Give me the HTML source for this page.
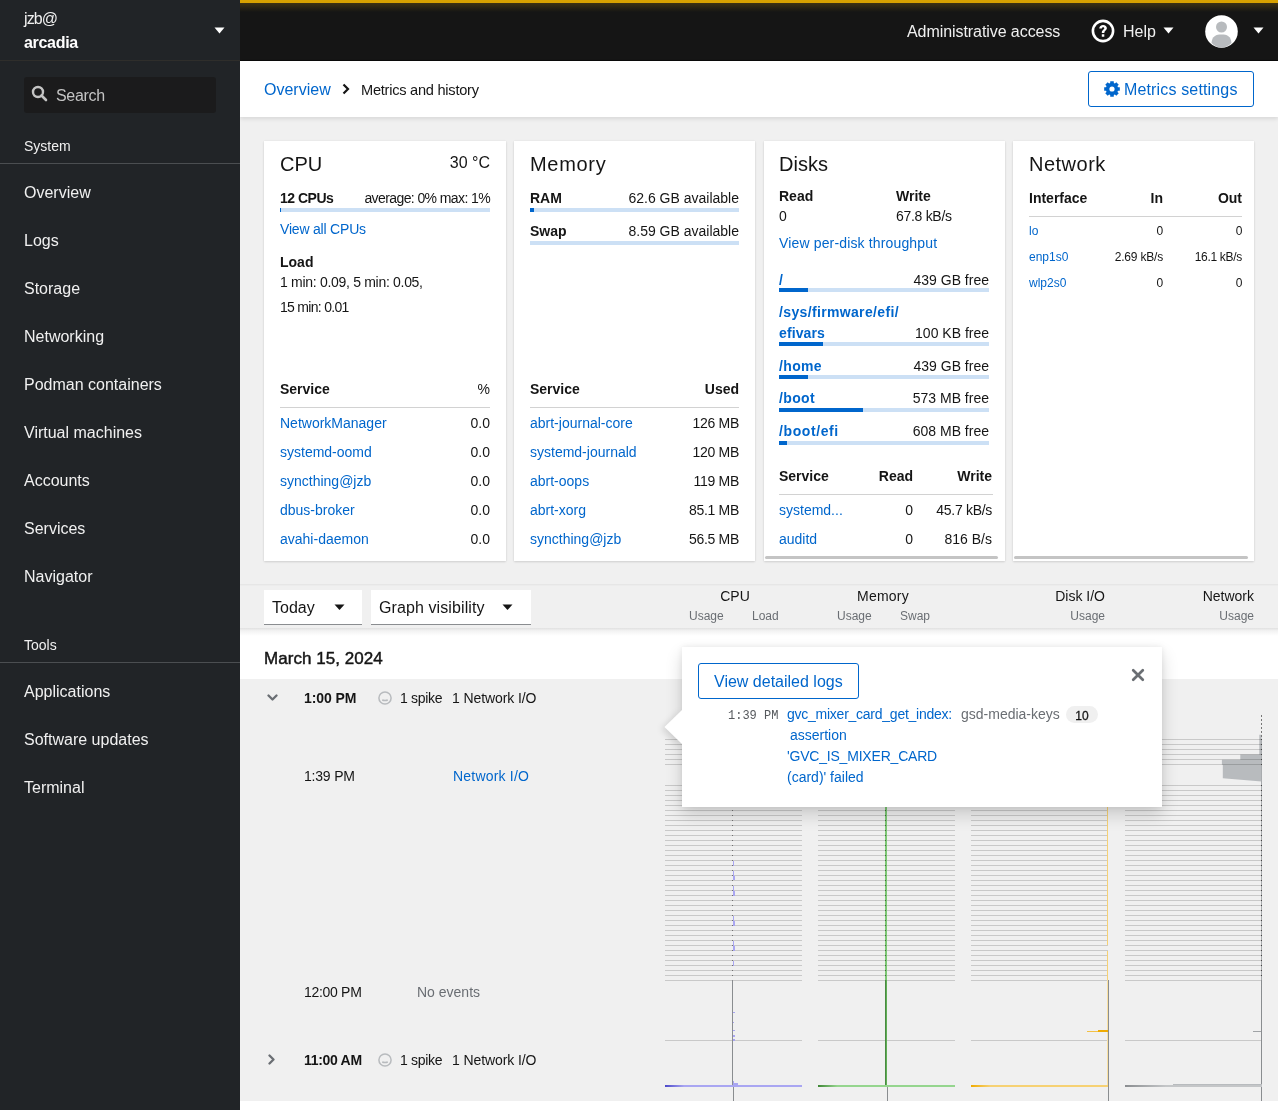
<!DOCTYPE html><html><head><meta charset="utf-8"><title>Metrics and history</title><style>
html,body{margin:0;padding:0;width:1278px;height:1110px;overflow:hidden;background:#f0f0f0;}
body{position:relative;font-family:"Liberation Sans", sans-serif;}
.t{position:absolute;white-space:nowrap;will-change:transform;}
.r{position:absolute;}
</style></head><body>
<div class="r" style="left:240px;top:0px;width:1038px;height:60px;background:#151515"></div>
<div class="r" style="left:240px;top:0px;width:1038px;height:3px;background:#d8a200"></div>
<div class="r" style="left:240px;top:3px;width:1038px;height:9px;background:linear-gradient(#3e3312,#151515)"></div>
<div class="r" style="left:240px;top:60px;width:1038px;height:1px;background:#0a0a0a"></div>
<div class="t" style="top:24.00px;font-size:16px;line-height:16px;color:#f0f0f0;letter-spacing:-0.07px;left:907px;">Administrative access</div>
<svg class="r" style="left:1091px;top:19px;" width="24" height="24" viewBox="0 0 24 24"><circle cx="12" cy="12" r="10.1" fill="none" stroke="#fff" stroke-width="2.6"/><path d="M8.3 9.6 C8.3 7.2 10 6 12.1 6 C14.3 6 15.9 7.3 15.9 9.2 C15.9 11.4 13.3 11.7 13.3 13.9 L10.8 13.9 C10.8 10.9 13.3 10.6 13.3 9.3 C13.3 8.6 12.8 8.2 12.1 8.2 C11.3 8.2 10.9 8.8 10.9 9.6 Z M10.8 15.3 L13.3 15.3 L13.3 17.8 L10.8 17.8 Z" fill="#fff"/></svg>
<div class="t" style="top:24.00px;font-size:16px;line-height:16px;color:#f0f0f0;left:1123px;">Help</div>
<svg class="r" style="left:1163px;top:27px;" width="11" height="7" viewBox="0 0 11 7"><path d="M0.5 0.5 L10.5 0.5 L5.5 6.5 Z" fill="#fff"/></svg>
<svg class="r" style="left:1205px;top:15px;" width="33" height="33" viewBox="0 0 33 33"><circle cx="16.5" cy="16.5" r="16.3" fill="#fff"/><circle cx="16.5" cy="12" r="5.5" fill="#b8bbbe"/><path d="M6.5 28 C7 21 11 19.5 16.5 19.5 C22 19.5 26 21 26.5 28 C23.5 31 20 32.5 16.5 32.5 C13 32.5 9.5 31 6.5 28 Z" fill="#b8bbbe"/></svg>
<svg class="r" style="left:1253px;top:27px;" width="11" height="7" viewBox="0 0 11 7"><path d="M0.5 0.5 L10.5 0.5 L5.5 6.5 Z" fill="#fff"/></svg>
<div class="r" style="left:240px;top:61px;width:1038px;height:56px;background:#fff;box-shadow:0 2px 4px rgba(0,0,0,0.10)"></div>
<div class="t" style="top:82.00px;font-size:16px;line-height:16px;color:#0066cc;left:264px;">Overview</div>
<svg class="r" style="left:342px;top:83px;" width="8" height="12" viewBox="0 0 8 12"><path d="M1.5 1.5 L6 6 L1.5 10.5" fill="none" stroke="#151515" stroke-width="2.2"/></svg>
<div class="t" style="top:83.00px;font-size:14.6px;line-height:14.6px;color:#151515;letter-spacing:-0.25px;left:361px;">Metrics and history</div>
<div class="r" style="left:1088px;top:71px;width:166px;height:36px;border:1px solid #0066cc;border-radius:3px;box-sizing:border-box;background:#fff"></div>
<svg class="r" style="left:1104px;top:81px;" width="16" height="16" viewBox="0 0 16 16"><path fill="#0066cc" fill-rule="evenodd" d="M13.92 6.17 L15.81 6.25 L15.81 9.75 L13.92 9.83 L13.48 10.89 L14.76 12.29 L12.29 14.76 L10.89 13.48 L9.83 13.92 L9.75 15.81 L6.25 15.81 L6.17 13.92 L5.11 13.48 L3.71 14.76 L1.24 12.29 L2.52 10.89 L2.08 9.83 L0.19 9.75 L0.19 6.25 L2.08 6.17 L2.52 5.11 L1.24 3.71 L3.71 1.24 L5.11 2.52 L6.17 2.08 L6.25 0.19 L9.75 0.19 L9.83 2.08 L10.89 2.52 L12.29 1.24 L14.76 3.71 L13.48 5.11 Z M8 5.4 A2.6 2.6 0 1 0 8 10.6 A2.6 2.6 0 1 0 8 5.4 Z"/></svg>
<div class="t" style="top:82.00px;font-size:16px;line-height:16px;color:#0066cc;letter-spacing:0.15px;left:1124px;">Metrics settings</div>
<div class="r" style="left:264px;top:141px;width:242px;height:420px;background:#fff;box-shadow:0 1px 2px rgba(3,3,3,0.12),0 0 2px rgba(3,3,3,0.06)"></div>
<div class="r" style="left:514px;top:141px;width:241px;height:420px;background:#fff;box-shadow:0 1px 2px rgba(3,3,3,0.12),0 0 2px rgba(3,3,3,0.06)"></div>
<div class="r" style="left:763.5px;top:141px;width:241.5px;height:420px;background:#fff;box-shadow:0 1px 2px rgba(3,3,3,0.12),0 0 2px rgba(3,3,3,0.06)"></div>
<div class="r" style="left:1013px;top:141px;width:241px;height:420px;background:#fff;box-shadow:0 1px 2px rgba(3,3,3,0.12),0 0 2px rgba(3,3,3,0.06)"></div>
<div class="t" style="top:154.00px;font-size:20px;line-height:20px;color:#151515;left:280px;">CPU</div>
<div class="t" style="top:155.00px;font-size:16px;line-height:16px;color:#151515;left:-110px;width:600px;text-align:right;">30 °C</div>
<div class="t" style="top:191.00px;font-size:14px;line-height:14px;color:#151515;font-weight:700;letter-spacing:-0.5px;left:280px;">12 CPUs</div>
<div class="t" style="top:191.00px;font-size:14px;line-height:14px;color:#151515;letter-spacing:-0.6px;left:-110px;width:600px;text-align:right;">average: 0% max: 1%</div>
<div class="r" style="left:280px;top:208px;width:210px;height:4px;background:#cce0f5"></div>
<div class="r" style="left:280px;top:208px;width:1px;height:4px;background:#0066cc"></div>
<div class="t" style="top:222.00px;font-size:14px;line-height:14px;color:#0066cc;letter-spacing:-0.2px;left:280px;">View all CPUs</div>
<div class="t" style="top:255.00px;font-size:14px;line-height:14px;color:#151515;font-weight:700;left:280px;">Load</div>
<div class="t" style="top:275.00px;font-size:14px;line-height:14px;color:#151515;letter-spacing:-0.3px;left:280px;">1 min: 0.09, 5 min: 0.05,</div>
<div class="t" style="top:300.00px;font-size:14px;line-height:14px;color:#151515;letter-spacing:-0.7px;left:280px;">15 min: 0.01</div>
<div class="t" style="top:382.00px;font-size:14px;line-height:14px;color:#151515;font-weight:700;left:280px;">Service</div>
<div class="t" style="top:382.00px;font-size:14px;line-height:14px;color:#151515;left:-110px;width:600px;text-align:right;">%</div>
<div class="r" style="left:280px;top:407px;width:210px;height:1px;background:#d2d2d2"></div>
<div class="t" style="top:416.00px;font-size:14px;line-height:14px;color:#0066cc;left:280px;">NetworkManager</div>
<div class="t" style="top:416.00px;font-size:14px;line-height:14px;color:#151515;left:-110px;width:600px;text-align:right;">0.0</div>
<div class="t" style="top:445.00px;font-size:14px;line-height:14px;color:#0066cc;left:280px;">systemd-oomd</div>
<div class="t" style="top:445.00px;font-size:14px;line-height:14px;color:#151515;left:-110px;width:600px;text-align:right;">0.0</div>
<div class="t" style="top:474.00px;font-size:14px;line-height:14px;color:#0066cc;left:280px;">syncthing@jzb</div>
<div class="t" style="top:474.00px;font-size:14px;line-height:14px;color:#151515;left:-110px;width:600px;text-align:right;">0.0</div>
<div class="t" style="top:503.00px;font-size:14px;line-height:14px;color:#0066cc;left:280px;">dbus-broker</div>
<div class="t" style="top:503.00px;font-size:14px;line-height:14px;color:#151515;left:-110px;width:600px;text-align:right;">0.0</div>
<div class="t" style="top:532.00px;font-size:14px;line-height:14px;color:#0066cc;left:280px;">avahi-daemon</div>
<div class="t" style="top:532.00px;font-size:14px;line-height:14px;color:#151515;left:-110px;width:600px;text-align:right;">0.0</div>
<div class="t" style="top:154.00px;font-size:20px;line-height:20px;color:#151515;letter-spacing:0.7px;left:530px;">Memory</div>
<div class="t" style="top:191.00px;font-size:14px;line-height:14px;color:#151515;font-weight:700;left:530px;">RAM</div>
<div class="t" style="top:191.00px;font-size:14px;line-height:14px;color:#151515;left:139px;width:600px;text-align:right;">62.6 GB available</div>
<div class="r" style="left:530px;top:208px;width:209px;height:4px;background:#cce0f5"></div>
<div class="r" style="left:530px;top:208px;width:4px;height:4px;background:#0066cc"></div>
<div class="t" style="top:224.00px;font-size:14px;line-height:14px;color:#151515;font-weight:700;left:530px;">Swap</div>
<div class="t" style="top:224.00px;font-size:14px;line-height:14px;color:#151515;left:139px;width:600px;text-align:right;">8.59 GB available</div>
<div class="r" style="left:530px;top:241px;width:209px;height:4px;background:#cce0f5"></div>
<div class="t" style="top:382.00px;font-size:14px;line-height:14px;color:#151515;font-weight:700;left:530px;">Service</div>
<div class="t" style="top:382.00px;font-size:14px;line-height:14px;color:#151515;font-weight:700;left:139px;width:600px;text-align:right;">Used</div>
<div class="r" style="left:530px;top:407px;width:209px;height:1px;background:#d2d2d2"></div>
<div class="t" style="top:416.00px;font-size:14px;line-height:14px;color:#0066cc;left:530px;">abrt-journal-core</div>
<div class="t" style="top:416.00px;font-size:14px;line-height:14px;color:#151515;letter-spacing:-0.3px;left:139px;width:600px;text-align:right;">126 MB</div>
<div class="t" style="top:445.00px;font-size:14px;line-height:14px;color:#0066cc;left:530px;">systemd-journald</div>
<div class="t" style="top:445.00px;font-size:14px;line-height:14px;color:#151515;letter-spacing:-0.3px;left:139px;width:600px;text-align:right;">120 MB</div>
<div class="t" style="top:474.00px;font-size:14px;line-height:14px;color:#0066cc;left:530px;">abrt-oops</div>
<div class="t" style="top:474.00px;font-size:14px;line-height:14px;color:#151515;letter-spacing:-0.3px;left:139px;width:600px;text-align:right;">119 MB</div>
<div class="t" style="top:503.00px;font-size:14px;line-height:14px;color:#0066cc;left:530px;">abrt-xorg</div>
<div class="t" style="top:503.00px;font-size:14px;line-height:14px;color:#151515;letter-spacing:-0.3px;left:139px;width:600px;text-align:right;">85.1 MB</div>
<div class="t" style="top:532.00px;font-size:14px;line-height:14px;color:#0066cc;left:530px;">syncthing@jzb</div>
<div class="t" style="top:532.00px;font-size:14px;line-height:14px;color:#151515;letter-spacing:-0.3px;left:139px;width:600px;text-align:right;">56.5 MB</div>
<div class="t" style="top:154.00px;font-size:20px;line-height:20px;color:#151515;left:779px;">Disks</div>
<div class="t" style="top:189.00px;font-size:14px;line-height:14px;color:#151515;font-weight:700;left:779px;">Read</div>
<div class="t" style="top:189.00px;font-size:14px;line-height:14px;color:#151515;font-weight:700;left:896px;">Write</div>
<div class="t" style="top:209.00px;font-size:14px;line-height:14px;color:#151515;left:779px;">0</div>
<div class="t" style="top:209.00px;font-size:14px;line-height:14px;color:#151515;letter-spacing:-0.3px;left:896px;">67.8 kB/s</div>
<div class="t" style="top:236.00px;font-size:14px;line-height:14px;color:#0066cc;letter-spacing:0.15px;left:779px;">View per-disk throughput</div>
<div class="t" style="top:273.00px;font-size:14px;line-height:14px;color:#0066cc;font-weight:700;left:779px;">/</div>
<div class="t" style="top:273.00px;font-size:14px;line-height:14px;color:#151515;left:389px;width:600px;text-align:right;">439 GB free</div>
<div class="r" style="left:779px;top:288px;width:210px;height:4px;background:#cce0f5"></div>
<div class="r" style="left:779px;top:288px;width:29px;height:4px;background:#0066cc"></div>
<div class="t" style="top:305.00px;font-size:14px;line-height:14px;color:#0066cc;font-weight:700;letter-spacing:0.35px;left:779px;">/sys/firmware/efi/</div>
<div class="t" style="top:326.00px;font-size:14px;line-height:14px;color:#0066cc;font-weight:700;letter-spacing:0.1px;left:779px;">efivars</div>
<div class="t" style="top:326.00px;font-size:14px;line-height:14px;color:#151515;left:389px;width:600px;text-align:right;">100 KB free</div>
<div class="r" style="left:779px;top:342px;width:210px;height:4px;background:#cce0f5"></div>
<div class="r" style="left:779px;top:342px;width:44px;height:4px;background:#0066cc"></div>
<div class="t" style="top:359.00px;font-size:14px;line-height:14px;color:#0066cc;font-weight:700;letter-spacing:0.35px;left:779px;">/home</div>
<div class="t" style="top:359.00px;font-size:14px;line-height:14px;color:#151515;left:389px;width:600px;text-align:right;">439 GB free</div>
<div class="r" style="left:779px;top:375px;width:210px;height:4px;background:#cce0f5"></div>
<div class="r" style="left:779px;top:375px;width:29px;height:4px;background:#0066cc"></div>
<div class="t" style="top:391.00px;font-size:14px;line-height:14px;color:#0066cc;font-weight:700;letter-spacing:0.35px;left:779px;">/boot</div>
<div class="t" style="top:391.00px;font-size:14px;line-height:14px;color:#151515;left:389px;width:600px;text-align:right;">573 MB free</div>
<div class="r" style="left:779px;top:408px;width:210px;height:4px;background:#cce0f5"></div>
<div class="r" style="left:779px;top:408px;width:84px;height:4px;background:#0066cc"></div>
<div class="t" style="top:424.00px;font-size:14px;line-height:14px;color:#0066cc;font-weight:700;letter-spacing:0.6px;left:779px;">/boot/efi</div>
<div class="t" style="top:424.00px;font-size:14px;line-height:14px;color:#151515;left:389px;width:600px;text-align:right;">608 MB free</div>
<div class="r" style="left:779px;top:441px;width:210px;height:4px;background:#cce0f5"></div>
<div class="r" style="left:779px;top:441px;width:8px;height:4px;background:#0066cc"></div>
<div class="t" style="top:469.00px;font-size:14px;line-height:14px;color:#151515;font-weight:700;left:779px;">Service</div>
<div class="t" style="top:469.00px;font-size:14px;line-height:14px;color:#151515;font-weight:700;left:313px;width:600px;text-align:right;">Read</div>
<div class="t" style="top:469.00px;font-size:14px;line-height:14px;color:#151515;font-weight:700;left:392px;width:600px;text-align:right;">Write</div>
<div class="r" style="left:779px;top:494px;width:214px;height:1px;background:#d2d2d2"></div>
<div class="t" style="top:503.00px;font-size:14px;line-height:14px;color:#0066cc;left:779px;">systemd...</div>
<div class="t" style="top:503.00px;font-size:14px;line-height:14px;color:#151515;left:313px;width:600px;text-align:right;">0</div>
<div class="t" style="top:503.00px;font-size:14px;line-height:14px;color:#151515;letter-spacing:-0.3px;left:392px;width:600px;text-align:right;">45.7 kB/s</div>
<div class="t" style="top:532.00px;font-size:14px;line-height:14px;color:#0066cc;left:779px;">auditd</div>
<div class="t" style="top:532.00px;font-size:14px;line-height:14px;color:#151515;left:313px;width:600px;text-align:right;">0</div>
<div class="t" style="top:532.00px;font-size:14px;line-height:14px;color:#151515;left:392px;width:600px;text-align:right;">816 B/s</div>
<div class="r" style="left:765px;top:556px;width:233px;height:3px;background:#c4c4c4;border-radius:2px"></div>
<div class="t" style="top:154.00px;font-size:20px;line-height:20px;color:#151515;letter-spacing:0.5px;left:1029px;">Network</div>
<div class="t" style="top:191.00px;font-size:14px;line-height:14px;color:#151515;font-weight:700;left:1029px;">Interface</div>
<div class="t" style="top:191.00px;font-size:14px;line-height:14px;color:#151515;font-weight:700;left:563px;width:600px;text-align:right;">In</div>
<div class="t" style="top:191.00px;font-size:14px;line-height:14px;color:#151515;font-weight:700;left:642px;width:600px;text-align:right;">Out</div>
<div class="r" style="left:1029px;top:216px;width:213px;height:1px;background:#d2d2d2"></div>
<div class="t" style="top:225.00px;font-size:12px;line-height:12px;color:#0066cc;left:1029px;">lo</div>
<div class="t" style="top:225.00px;font-size:12px;line-height:12px;color:#151515;letter-spacing:-0.2px;left:563px;width:600px;text-align:right;">0</div>
<div class="t" style="top:225.00px;font-size:12px;line-height:12px;color:#151515;letter-spacing:-0.3px;left:642px;width:600px;text-align:right;">0</div>
<div class="t" style="top:251.00px;font-size:12px;line-height:12px;color:#0066cc;left:1029px;">enp1s0</div>
<div class="t" style="top:251.00px;font-size:12px;line-height:12px;color:#151515;letter-spacing:-0.2px;left:563px;width:600px;text-align:right;">2.69 kB/s</div>
<div class="t" style="top:251.00px;font-size:12px;line-height:12px;color:#151515;letter-spacing:-0.3px;left:642px;width:600px;text-align:right;">16.1 kB/s</div>
<div class="t" style="top:277.00px;font-size:12px;line-height:12px;color:#0066cc;left:1029px;">wlp2s0</div>
<div class="t" style="top:277.00px;font-size:12px;line-height:12px;color:#151515;letter-spacing:-0.2px;left:563px;width:600px;text-align:right;">0</div>
<div class="t" style="top:277.00px;font-size:12px;line-height:12px;color:#151515;letter-spacing:-0.3px;left:642px;width:600px;text-align:right;">0</div>
<div class="r" style="left:1014px;top:556px;width:234px;height:3px;background:#c4c4c4;border-radius:2px"></div>
<div class="r" style="left:240px;top:584px;width:1038px;height:44px;background:#f0f0f0;box-shadow:0 3px 4px -1px rgba(3,3,3,0.10)"></div>
<div class="r" style="left:240px;top:628px;width:1038px;height:51px;background:#fff"></div>
<div class="r" style="left:240px;top:679px;width:1038px;height:422px;background:#f0f0f0"></div>
<div class="r" style="left:240px;top:1101px;width:1038px;height:9px;background:#fff"></div>
<div class="r" style="left:240px;top:628px;width:1038px;height:8px;background:linear-gradient(rgba(3,3,3,0.12),rgba(3,3,3,0.05) 35%,rgba(3,3,3,0))"></div>
<div class="r" style="left:240px;top:584px;width:1038px;height:1px;background:rgba(3,3,3,0.04)"></div>
<div class="r" style="left:240px;top:585px;width:1038px;height:1px;background:rgba(3,3,3,0.015)"></div>
<div class="r" style="left:264px;top:590px;width:98px;height:35px;background:#fff;border-bottom:1px solid #8a8d90;box-sizing:border-box"></div>
<div class="t" style="top:600.00px;font-size:16px;line-height:16px;color:#151515;left:272px;">Today</div>
<svg class="r" style="left:334px;top:604px;" width="11" height="7" viewBox="0 0 11 7"><path d="M0.5 0.5 L10.5 0.5 L5.5 6 Z" fill="#151515"/></svg>
<div class="r" style="left:371px;top:590px;width:160px;height:35px;background:#fff;border-bottom:1px solid #8a8d90;box-sizing:border-box"></div>
<div class="t" style="top:600.00px;font-size:16px;line-height:16px;color:#151515;letter-spacing:0.1px;left:379px;">Graph visibility</div>
<svg class="r" style="left:502px;top:604px;" width="11" height="7" viewBox="0 0 11 7"><path d="M0.5 0.5 L10.5 0.5 L5.5 6 Z" fill="#151515"/></svg>
<div class="t" style="top:589.00px;font-size:14px;line-height:14px;color:#151515;left:434.5px;width:600px;text-align:center;">CPU</div>
<div class="t" style="top:610.00px;font-size:12px;line-height:12px;color:#6a6e73;left:689px;">Usage</div>
<div class="t" style="top:610.00px;font-size:12px;line-height:12px;color:#6a6e73;left:752px;">Load</div>
<div class="t" style="top:589.00px;font-size:14px;line-height:14px;color:#151515;letter-spacing:0.2px;left:582.5px;width:600px;text-align:center;">Memory</div>
<div class="t" style="top:610.00px;font-size:12px;line-height:12px;color:#6a6e73;left:836.5px;">Usage</div>
<div class="t" style="top:610.00px;font-size:12px;line-height:12px;color:#6a6e73;left:899.5px;">Swap</div>
<div class="t" style="top:589.00px;font-size:14px;line-height:14px;color:#151515;left:505px;width:600px;text-align:right;">Disk I/O</div>
<div class="t" style="top:610.00px;font-size:12px;line-height:12px;color:#6a6e73;left:505px;width:600px;text-align:right;">Usage</div>
<div class="t" style="top:589.00px;font-size:14px;line-height:14px;color:#151515;left:654px;width:600px;text-align:right;">Network</div>
<div class="t" style="top:610.00px;font-size:12px;line-height:12px;color:#6a6e73;left:654px;width:600px;text-align:right;">Usage</div>
<div class="t" style="top:650.00px;font-size:17px;line-height:17px;color:#151515;letter-spacing:0.05px;left:264px;-webkit-text-stroke:0.45px #151515;">March 15, 2024</div>
<svg class="r" style="left:1215px;top:730px;" width="50" height="55" viewBox="0 0 50 55"><path d="M44.3 4.8 L46.6 4.8 L46.6 51.4 L7.8 48.2 L7.8 34.8 L6.9 34.8 L6.9 29.7 L25.3 29.7 L25.3 24.6 L44.3 24.6 Z" fill="#b8bbbe"/></svg>
<div class="r" style="left:665px;top:739px;width:137px;height:1px;background:rgba(0,0,0,0.16)"></div>
<div class="r" style="left:665px;top:744px;width:137px;height:1px;background:rgba(0,0,0,0.16)"></div>
<div class="r" style="left:665px;top:749px;width:137px;height:1px;background:rgba(0,0,0,0.16)"></div>
<div class="r" style="left:665px;top:754px;width:137px;height:1px;background:rgba(0,0,0,0.16)"></div>
<div class="r" style="left:665px;top:759px;width:137px;height:1px;background:rgba(0,0,0,0.16)"></div>
<div class="r" style="left:665px;top:764px;width:137px;height:1px;background:rgba(0,0,0,0.16)"></div>
<div class="r" style="left:665px;top:785px;width:137px;height:1px;background:rgba(0,0,0,0.16)"></div>
<div class="r" style="left:665px;top:790px;width:137px;height:1px;background:rgba(0,0,0,0.16)"></div>
<div class="r" style="left:665px;top:795px;width:137px;height:1px;background:rgba(0,0,0,0.16)"></div>
<div class="r" style="left:665px;top:800px;width:137px;height:1px;background:rgba(0,0,0,0.16)"></div>
<div class="r" style="left:665px;top:805px;width:137px;height:1px;background:rgba(0,0,0,0.16)"></div>
<div class="r" style="left:665px;top:810px;width:137px;height:1px;background:rgba(0,0,0,0.16)"></div>
<div class="r" style="left:665px;top:815px;width:137px;height:1px;background:rgba(0,0,0,0.16)"></div>
<div class="r" style="left:665px;top:820px;width:137px;height:1px;background:rgba(0,0,0,0.16)"></div>
<div class="r" style="left:665px;top:825px;width:137px;height:1px;background:rgba(0,0,0,0.16)"></div>
<div class="r" style="left:665px;top:830px;width:137px;height:1px;background:rgba(0,0,0,0.16)"></div>
<div class="r" style="left:665px;top:835px;width:137px;height:1px;background:rgba(0,0,0,0.16)"></div>
<div class="r" style="left:665px;top:840px;width:137px;height:1px;background:rgba(0,0,0,0.16)"></div>
<div class="r" style="left:665px;top:845px;width:137px;height:1px;background:rgba(0,0,0,0.16)"></div>
<div class="r" style="left:665px;top:850px;width:137px;height:1px;background:rgba(0,0,0,0.16)"></div>
<div class="r" style="left:665px;top:855px;width:137px;height:1px;background:rgba(0,0,0,0.16)"></div>
<div class="r" style="left:665px;top:860px;width:137px;height:1px;background:rgba(0,0,0,0.16)"></div>
<div class="r" style="left:665px;top:865px;width:137px;height:1px;background:rgba(0,0,0,0.16)"></div>
<div class="r" style="left:665px;top:870px;width:137px;height:1px;background:rgba(0,0,0,0.16)"></div>
<div class="r" style="left:665px;top:875px;width:137px;height:1px;background:rgba(0,0,0,0.16)"></div>
<div class="r" style="left:665px;top:880px;width:137px;height:1px;background:rgba(0,0,0,0.16)"></div>
<div class="r" style="left:665px;top:885px;width:137px;height:1px;background:rgba(0,0,0,0.16)"></div>
<div class="r" style="left:665px;top:890px;width:137px;height:1px;background:rgba(0,0,0,0.16)"></div>
<div class="r" style="left:665px;top:895px;width:137px;height:1px;background:rgba(0,0,0,0.16)"></div>
<div class="r" style="left:665px;top:900px;width:137px;height:1px;background:rgba(0,0,0,0.16)"></div>
<div class="r" style="left:665px;top:905px;width:137px;height:1px;background:rgba(0,0,0,0.16)"></div>
<div class="r" style="left:665px;top:910px;width:137px;height:1px;background:rgba(0,0,0,0.16)"></div>
<div class="r" style="left:665px;top:915px;width:137px;height:1px;background:rgba(0,0,0,0.16)"></div>
<div class="r" style="left:665px;top:920px;width:137px;height:1px;background:rgba(0,0,0,0.16)"></div>
<div class="r" style="left:665px;top:925px;width:137px;height:1px;background:rgba(0,0,0,0.16)"></div>
<div class="r" style="left:665px;top:930px;width:137px;height:1px;background:rgba(0,0,0,0.16)"></div>
<div class="r" style="left:665px;top:935px;width:137px;height:1px;background:rgba(0,0,0,0.16)"></div>
<div class="r" style="left:665px;top:940px;width:137px;height:1px;background:rgba(0,0,0,0.16)"></div>
<div class="r" style="left:665px;top:945px;width:137px;height:1px;background:rgba(0,0,0,0.16)"></div>
<div class="r" style="left:665px;top:950px;width:137px;height:1px;background:rgba(0,0,0,0.16)"></div>
<div class="r" style="left:665px;top:955px;width:137px;height:1px;background:rgba(0,0,0,0.16)"></div>
<div class="r" style="left:665px;top:960px;width:137px;height:1px;background:rgba(0,0,0,0.16)"></div>
<div class="r" style="left:665px;top:965px;width:137px;height:1px;background:rgba(0,0,0,0.16)"></div>
<div class="r" style="left:665px;top:970px;width:137px;height:1px;background:rgba(0,0,0,0.16)"></div>
<div class="r" style="left:665px;top:975px;width:137px;height:1px;background:rgba(0,0,0,0.16)"></div>
<div class="r" style="left:665px;top:980px;width:137px;height:1px;background:rgba(0,0,0,0.16)"></div>
<div class="r" style="left:665px;top:1040px;width:137px;height:1px;background:rgba(0,0,0,0.16)"></div>
<div class="r" style="left:818px;top:739px;width:137px;height:1px;background:rgba(0,0,0,0.16)"></div>
<div class="r" style="left:818px;top:744px;width:137px;height:1px;background:rgba(0,0,0,0.16)"></div>
<div class="r" style="left:818px;top:749px;width:137px;height:1px;background:rgba(0,0,0,0.16)"></div>
<div class="r" style="left:818px;top:754px;width:137px;height:1px;background:rgba(0,0,0,0.16)"></div>
<div class="r" style="left:818px;top:759px;width:137px;height:1px;background:rgba(0,0,0,0.16)"></div>
<div class="r" style="left:818px;top:764px;width:137px;height:1px;background:rgba(0,0,0,0.16)"></div>
<div class="r" style="left:818px;top:785px;width:137px;height:1px;background:rgba(0,0,0,0.16)"></div>
<div class="r" style="left:818px;top:790px;width:137px;height:1px;background:rgba(0,0,0,0.16)"></div>
<div class="r" style="left:818px;top:795px;width:137px;height:1px;background:rgba(0,0,0,0.16)"></div>
<div class="r" style="left:818px;top:800px;width:137px;height:1px;background:rgba(0,0,0,0.16)"></div>
<div class="r" style="left:818px;top:805px;width:137px;height:1px;background:rgba(0,0,0,0.16)"></div>
<div class="r" style="left:818px;top:810px;width:137px;height:1px;background:rgba(0,0,0,0.16)"></div>
<div class="r" style="left:818px;top:815px;width:137px;height:1px;background:rgba(0,0,0,0.16)"></div>
<div class="r" style="left:818px;top:820px;width:137px;height:1px;background:rgba(0,0,0,0.16)"></div>
<div class="r" style="left:818px;top:825px;width:137px;height:1px;background:rgba(0,0,0,0.16)"></div>
<div class="r" style="left:818px;top:830px;width:137px;height:1px;background:rgba(0,0,0,0.16)"></div>
<div class="r" style="left:818px;top:835px;width:137px;height:1px;background:rgba(0,0,0,0.16)"></div>
<div class="r" style="left:818px;top:840px;width:137px;height:1px;background:rgba(0,0,0,0.16)"></div>
<div class="r" style="left:818px;top:845px;width:137px;height:1px;background:rgba(0,0,0,0.16)"></div>
<div class="r" style="left:818px;top:850px;width:137px;height:1px;background:rgba(0,0,0,0.16)"></div>
<div class="r" style="left:818px;top:855px;width:137px;height:1px;background:rgba(0,0,0,0.16)"></div>
<div class="r" style="left:818px;top:860px;width:137px;height:1px;background:rgba(0,0,0,0.16)"></div>
<div class="r" style="left:818px;top:865px;width:137px;height:1px;background:rgba(0,0,0,0.16)"></div>
<div class="r" style="left:818px;top:870px;width:137px;height:1px;background:rgba(0,0,0,0.16)"></div>
<div class="r" style="left:818px;top:875px;width:137px;height:1px;background:rgba(0,0,0,0.16)"></div>
<div class="r" style="left:818px;top:880px;width:137px;height:1px;background:rgba(0,0,0,0.16)"></div>
<div class="r" style="left:818px;top:885px;width:137px;height:1px;background:rgba(0,0,0,0.16)"></div>
<div class="r" style="left:818px;top:890px;width:137px;height:1px;background:rgba(0,0,0,0.16)"></div>
<div class="r" style="left:818px;top:895px;width:137px;height:1px;background:rgba(0,0,0,0.16)"></div>
<div class="r" style="left:818px;top:900px;width:137px;height:1px;background:rgba(0,0,0,0.16)"></div>
<div class="r" style="left:818px;top:905px;width:137px;height:1px;background:rgba(0,0,0,0.16)"></div>
<div class="r" style="left:818px;top:910px;width:137px;height:1px;background:rgba(0,0,0,0.16)"></div>
<div class="r" style="left:818px;top:915px;width:137px;height:1px;background:rgba(0,0,0,0.16)"></div>
<div class="r" style="left:818px;top:920px;width:137px;height:1px;background:rgba(0,0,0,0.16)"></div>
<div class="r" style="left:818px;top:925px;width:137px;height:1px;background:rgba(0,0,0,0.16)"></div>
<div class="r" style="left:818px;top:930px;width:137px;height:1px;background:rgba(0,0,0,0.16)"></div>
<div class="r" style="left:818px;top:935px;width:137px;height:1px;background:rgba(0,0,0,0.16)"></div>
<div class="r" style="left:818px;top:940px;width:137px;height:1px;background:rgba(0,0,0,0.16)"></div>
<div class="r" style="left:818px;top:945px;width:137px;height:1px;background:rgba(0,0,0,0.16)"></div>
<div class="r" style="left:818px;top:950px;width:137px;height:1px;background:rgba(0,0,0,0.16)"></div>
<div class="r" style="left:818px;top:955px;width:137px;height:1px;background:rgba(0,0,0,0.16)"></div>
<div class="r" style="left:818px;top:960px;width:137px;height:1px;background:rgba(0,0,0,0.16)"></div>
<div class="r" style="left:818px;top:965px;width:137px;height:1px;background:rgba(0,0,0,0.16)"></div>
<div class="r" style="left:818px;top:970px;width:137px;height:1px;background:rgba(0,0,0,0.16)"></div>
<div class="r" style="left:818px;top:975px;width:137px;height:1px;background:rgba(0,0,0,0.16)"></div>
<div class="r" style="left:818px;top:980px;width:137px;height:1px;background:rgba(0,0,0,0.16)"></div>
<div class="r" style="left:818px;top:1040px;width:137px;height:1px;background:rgba(0,0,0,0.16)"></div>
<div class="r" style="left:971px;top:739px;width:137px;height:1px;background:rgba(0,0,0,0.16)"></div>
<div class="r" style="left:971px;top:744px;width:137px;height:1px;background:rgba(0,0,0,0.16)"></div>
<div class="r" style="left:971px;top:749px;width:137px;height:1px;background:rgba(0,0,0,0.16)"></div>
<div class="r" style="left:971px;top:754px;width:137px;height:1px;background:rgba(0,0,0,0.16)"></div>
<div class="r" style="left:971px;top:759px;width:137px;height:1px;background:rgba(0,0,0,0.16)"></div>
<div class="r" style="left:971px;top:764px;width:137px;height:1px;background:rgba(0,0,0,0.16)"></div>
<div class="r" style="left:971px;top:785px;width:137px;height:1px;background:rgba(0,0,0,0.16)"></div>
<div class="r" style="left:971px;top:790px;width:137px;height:1px;background:rgba(0,0,0,0.16)"></div>
<div class="r" style="left:971px;top:795px;width:137px;height:1px;background:rgba(0,0,0,0.16)"></div>
<div class="r" style="left:971px;top:800px;width:137px;height:1px;background:rgba(0,0,0,0.16)"></div>
<div class="r" style="left:971px;top:805px;width:137px;height:1px;background:rgba(0,0,0,0.16)"></div>
<div class="r" style="left:971px;top:810px;width:137px;height:1px;background:rgba(0,0,0,0.16)"></div>
<div class="r" style="left:971px;top:815px;width:137px;height:1px;background:rgba(0,0,0,0.16)"></div>
<div class="r" style="left:971px;top:820px;width:137px;height:1px;background:rgba(0,0,0,0.16)"></div>
<div class="r" style="left:971px;top:825px;width:137px;height:1px;background:rgba(0,0,0,0.16)"></div>
<div class="r" style="left:971px;top:830px;width:137px;height:1px;background:rgba(0,0,0,0.16)"></div>
<div class="r" style="left:971px;top:835px;width:137px;height:1px;background:rgba(0,0,0,0.16)"></div>
<div class="r" style="left:971px;top:840px;width:137px;height:1px;background:rgba(0,0,0,0.16)"></div>
<div class="r" style="left:971px;top:845px;width:137px;height:1px;background:rgba(0,0,0,0.16)"></div>
<div class="r" style="left:971px;top:850px;width:137px;height:1px;background:rgba(0,0,0,0.16)"></div>
<div class="r" style="left:971px;top:855px;width:137px;height:1px;background:rgba(0,0,0,0.16)"></div>
<div class="r" style="left:971px;top:860px;width:137px;height:1px;background:rgba(0,0,0,0.16)"></div>
<div class="r" style="left:971px;top:865px;width:137px;height:1px;background:rgba(0,0,0,0.16)"></div>
<div class="r" style="left:971px;top:870px;width:137px;height:1px;background:rgba(0,0,0,0.16)"></div>
<div class="r" style="left:971px;top:875px;width:137px;height:1px;background:rgba(0,0,0,0.16)"></div>
<div class="r" style="left:971px;top:880px;width:137px;height:1px;background:rgba(0,0,0,0.16)"></div>
<div class="r" style="left:971px;top:885px;width:137px;height:1px;background:rgba(0,0,0,0.16)"></div>
<div class="r" style="left:971px;top:890px;width:137px;height:1px;background:rgba(0,0,0,0.16)"></div>
<div class="r" style="left:971px;top:895px;width:137px;height:1px;background:rgba(0,0,0,0.16)"></div>
<div class="r" style="left:971px;top:900px;width:137px;height:1px;background:rgba(0,0,0,0.16)"></div>
<div class="r" style="left:971px;top:905px;width:137px;height:1px;background:rgba(0,0,0,0.16)"></div>
<div class="r" style="left:971px;top:910px;width:137px;height:1px;background:rgba(0,0,0,0.16)"></div>
<div class="r" style="left:971px;top:915px;width:137px;height:1px;background:rgba(0,0,0,0.16)"></div>
<div class="r" style="left:971px;top:920px;width:137px;height:1px;background:rgba(0,0,0,0.16)"></div>
<div class="r" style="left:971px;top:925px;width:137px;height:1px;background:rgba(0,0,0,0.16)"></div>
<div class="r" style="left:971px;top:930px;width:137px;height:1px;background:rgba(0,0,0,0.16)"></div>
<div class="r" style="left:971px;top:935px;width:137px;height:1px;background:rgba(0,0,0,0.16)"></div>
<div class="r" style="left:971px;top:940px;width:137px;height:1px;background:rgba(0,0,0,0.16)"></div>
<div class="r" style="left:971px;top:945px;width:137px;height:1px;background:rgba(0,0,0,0.16)"></div>
<div class="r" style="left:971px;top:950px;width:137px;height:1px;background:rgba(0,0,0,0.16)"></div>
<div class="r" style="left:971px;top:955px;width:137px;height:1px;background:rgba(0,0,0,0.16)"></div>
<div class="r" style="left:971px;top:960px;width:137px;height:1px;background:rgba(0,0,0,0.16)"></div>
<div class="r" style="left:971px;top:965px;width:137px;height:1px;background:rgba(0,0,0,0.16)"></div>
<div class="r" style="left:971px;top:970px;width:137px;height:1px;background:rgba(0,0,0,0.16)"></div>
<div class="r" style="left:971px;top:975px;width:137px;height:1px;background:rgba(0,0,0,0.16)"></div>
<div class="r" style="left:971px;top:980px;width:137px;height:1px;background:rgba(0,0,0,0.16)"></div>
<div class="r" style="left:971px;top:1040px;width:137px;height:1px;background:rgba(0,0,0,0.16)"></div>
<div class="r" style="left:1125px;top:739px;width:137px;height:1px;background:rgba(0,0,0,0.16)"></div>
<div class="r" style="left:1125px;top:744px;width:137px;height:1px;background:rgba(0,0,0,0.16)"></div>
<div class="r" style="left:1125px;top:749px;width:137px;height:1px;background:rgba(0,0,0,0.16)"></div>
<div class="r" style="left:1125px;top:754px;width:137px;height:1px;background:rgba(0,0,0,0.16)"></div>
<div class="r" style="left:1125px;top:759px;width:137px;height:1px;background:rgba(0,0,0,0.16)"></div>
<div class="r" style="left:1125px;top:764px;width:137px;height:1px;background:rgba(0,0,0,0.16)"></div>
<div class="r" style="left:1125px;top:785px;width:137px;height:1px;background:rgba(0,0,0,0.16)"></div>
<div class="r" style="left:1125px;top:790px;width:137px;height:1px;background:rgba(0,0,0,0.16)"></div>
<div class="r" style="left:1125px;top:795px;width:137px;height:1px;background:rgba(0,0,0,0.16)"></div>
<div class="r" style="left:1125px;top:800px;width:137px;height:1px;background:rgba(0,0,0,0.16)"></div>
<div class="r" style="left:1125px;top:805px;width:137px;height:1px;background:rgba(0,0,0,0.16)"></div>
<div class="r" style="left:1125px;top:810px;width:137px;height:1px;background:rgba(0,0,0,0.16)"></div>
<div class="r" style="left:1125px;top:815px;width:137px;height:1px;background:rgba(0,0,0,0.16)"></div>
<div class="r" style="left:1125px;top:820px;width:137px;height:1px;background:rgba(0,0,0,0.16)"></div>
<div class="r" style="left:1125px;top:825px;width:137px;height:1px;background:rgba(0,0,0,0.16)"></div>
<div class="r" style="left:1125px;top:830px;width:137px;height:1px;background:rgba(0,0,0,0.16)"></div>
<div class="r" style="left:1125px;top:835px;width:137px;height:1px;background:rgba(0,0,0,0.16)"></div>
<div class="r" style="left:1125px;top:840px;width:137px;height:1px;background:rgba(0,0,0,0.16)"></div>
<div class="r" style="left:1125px;top:845px;width:137px;height:1px;background:rgba(0,0,0,0.16)"></div>
<div class="r" style="left:1125px;top:850px;width:137px;height:1px;background:rgba(0,0,0,0.16)"></div>
<div class="r" style="left:1125px;top:855px;width:137px;height:1px;background:rgba(0,0,0,0.16)"></div>
<div class="r" style="left:1125px;top:860px;width:137px;height:1px;background:rgba(0,0,0,0.16)"></div>
<div class="r" style="left:1125px;top:865px;width:137px;height:1px;background:rgba(0,0,0,0.16)"></div>
<div class="r" style="left:1125px;top:870px;width:137px;height:1px;background:rgba(0,0,0,0.16)"></div>
<div class="r" style="left:1125px;top:875px;width:137px;height:1px;background:rgba(0,0,0,0.16)"></div>
<div class="r" style="left:1125px;top:880px;width:137px;height:1px;background:rgba(0,0,0,0.16)"></div>
<div class="r" style="left:1125px;top:885px;width:137px;height:1px;background:rgba(0,0,0,0.16)"></div>
<div class="r" style="left:1125px;top:890px;width:137px;height:1px;background:rgba(0,0,0,0.16)"></div>
<div class="r" style="left:1125px;top:895px;width:137px;height:1px;background:rgba(0,0,0,0.16)"></div>
<div class="r" style="left:1125px;top:900px;width:137px;height:1px;background:rgba(0,0,0,0.16)"></div>
<div class="r" style="left:1125px;top:905px;width:137px;height:1px;background:rgba(0,0,0,0.16)"></div>
<div class="r" style="left:1125px;top:910px;width:137px;height:1px;background:rgba(0,0,0,0.16)"></div>
<div class="r" style="left:1125px;top:915px;width:137px;height:1px;background:rgba(0,0,0,0.16)"></div>
<div class="r" style="left:1125px;top:920px;width:137px;height:1px;background:rgba(0,0,0,0.16)"></div>
<div class="r" style="left:1125px;top:925px;width:137px;height:1px;background:rgba(0,0,0,0.16)"></div>
<div class="r" style="left:1125px;top:930px;width:137px;height:1px;background:rgba(0,0,0,0.16)"></div>
<div class="r" style="left:1125px;top:935px;width:137px;height:1px;background:rgba(0,0,0,0.16)"></div>
<div class="r" style="left:1125px;top:940px;width:137px;height:1px;background:rgba(0,0,0,0.16)"></div>
<div class="r" style="left:1125px;top:945px;width:137px;height:1px;background:rgba(0,0,0,0.16)"></div>
<div class="r" style="left:1125px;top:950px;width:137px;height:1px;background:rgba(0,0,0,0.16)"></div>
<div class="r" style="left:1125px;top:955px;width:137px;height:1px;background:rgba(0,0,0,0.16)"></div>
<div class="r" style="left:1125px;top:960px;width:137px;height:1px;background:rgba(0,0,0,0.16)"></div>
<div class="r" style="left:1125px;top:965px;width:137px;height:1px;background:rgba(0,0,0,0.16)"></div>
<div class="r" style="left:1125px;top:970px;width:137px;height:1px;background:rgba(0,0,0,0.16)"></div>
<div class="r" style="left:1125px;top:975px;width:137px;height:1px;background:rgba(0,0,0,0.16)"></div>
<div class="r" style="left:1125px;top:980px;width:137px;height:1px;background:rgba(0,0,0,0.16)"></div>
<div class="r" style="left:1125px;top:1040px;width:137px;height:1px;background:rgba(0,0,0,0.16)"></div>
<div class="r" style="left:732px;top:739px;width:1px;height:1px;background:#707070"></div>
<div class="r" style="left:732px;top:744px;width:1px;height:1px;background:#707070"></div>
<div class="r" style="left:732px;top:749px;width:1px;height:1px;background:#707070"></div>
<div class="r" style="left:732px;top:754px;width:1px;height:1px;background:#707070"></div>
<div class="r" style="left:732px;top:759px;width:1px;height:1px;background:#707070"></div>
<div class="r" style="left:732px;top:764px;width:1px;height:1px;background:#707070"></div>
<div class="r" style="left:732px;top:785px;width:1px;height:1px;background:#707070"></div>
<div class="r" style="left:732px;top:790px;width:1px;height:1px;background:#707070"></div>
<div class="r" style="left:732px;top:795px;width:1px;height:1px;background:#707070"></div>
<div class="r" style="left:732px;top:800px;width:1px;height:1px;background:#707070"></div>
<div class="r" style="left:732px;top:805px;width:1px;height:1px;background:#707070"></div>
<div class="r" style="left:732px;top:810px;width:1px;height:1px;background:#707070"></div>
<div class="r" style="left:732px;top:815px;width:1px;height:1px;background:#707070"></div>
<div class="r" style="left:732px;top:820px;width:1px;height:1px;background:#707070"></div>
<div class="r" style="left:732px;top:825px;width:1px;height:1px;background:#707070"></div>
<div class="r" style="left:732px;top:830px;width:1px;height:1px;background:#707070"></div>
<div class="r" style="left:732px;top:835px;width:1px;height:1px;background:#707070"></div>
<div class="r" style="left:732px;top:840px;width:1px;height:1px;background:#707070"></div>
<div class="r" style="left:732px;top:845px;width:1px;height:1px;background:#707070"></div>
<div class="r" style="left:732px;top:850px;width:1px;height:1px;background:#707070"></div>
<div class="r" style="left:732px;top:855px;width:1px;height:1px;background:#707070"></div>
<div class="r" style="left:732px;top:860px;width:1px;height:1px;background:#707070"></div>
<div class="r" style="left:732px;top:865px;width:1px;height:1px;background:#707070"></div>
<div class="r" style="left:732px;top:870px;width:1px;height:1px;background:#707070"></div>
<div class="r" style="left:732px;top:875px;width:1px;height:1px;background:#707070"></div>
<div class="r" style="left:732px;top:880px;width:1px;height:1px;background:#707070"></div>
<div class="r" style="left:732px;top:885px;width:1px;height:1px;background:#707070"></div>
<div class="r" style="left:732px;top:890px;width:1px;height:1px;background:#707070"></div>
<div class="r" style="left:732px;top:895px;width:1px;height:1px;background:#707070"></div>
<div class="r" style="left:732px;top:900px;width:1px;height:1px;background:#707070"></div>
<div class="r" style="left:732px;top:905px;width:1px;height:1px;background:#707070"></div>
<div class="r" style="left:732px;top:910px;width:1px;height:1px;background:#707070"></div>
<div class="r" style="left:732px;top:915px;width:1px;height:1px;background:#707070"></div>
<div class="r" style="left:732px;top:920px;width:1px;height:1px;background:#707070"></div>
<div class="r" style="left:732px;top:925px;width:1px;height:1px;background:#707070"></div>
<div class="r" style="left:732px;top:930px;width:1px;height:1px;background:#707070"></div>
<div class="r" style="left:732px;top:935px;width:1px;height:1px;background:#707070"></div>
<div class="r" style="left:732px;top:940px;width:1px;height:1px;background:#707070"></div>
<div class="r" style="left:732px;top:945px;width:1px;height:1px;background:#707070"></div>
<div class="r" style="left:732px;top:950px;width:1px;height:1px;background:#707070"></div>
<div class="r" style="left:732px;top:955px;width:1px;height:1px;background:#707070"></div>
<div class="r" style="left:732px;top:960px;width:1px;height:1px;background:#707070"></div>
<div class="r" style="left:732px;top:965px;width:1px;height:1px;background:#707070"></div>
<div class="r" style="left:732px;top:970px;width:1px;height:1px;background:#707070"></div>
<div class="r" style="left:732px;top:975px;width:1px;height:1px;background:#707070"></div>
<div class="r" style="left:732px;top:980px;width:1px;height:1px;background:#707070"></div>
<div class="r" style="left:732px;top:980px;width:1px;height:105px;background:#8a8d90"></div>
<div class="r" style="left:733px;top:1085px;width:1px;height:16px;background:#8a8d90"></div>
<div class="r" style="left:733px;top:861px;width:1px;height:5px;background:#a9a6f2"></div>
<div class="r" style="left:733px;top:871px;width:1px;height:9px;background:#a9a6f2"></div>
<div class="r" style="left:733px;top:876px;width:2px;height:4px;background:#a9a6f2"></div>
<div class="r" style="left:733px;top:886px;width:1px;height:10px;background:#a9a6f2"></div>
<div class="r" style="left:733px;top:891px;width:2px;height:5px;background:#a9a6f2"></div>
<div class="r" style="left:733px;top:916px;width:1px;height:10px;background:#a9a6f2"></div>
<div class="r" style="left:733px;top:921px;width:2px;height:5px;background:#a9a6f2"></div>
<div class="r" style="left:733px;top:941px;width:1px;height:10px;background:#a9a6f2"></div>
<div class="r" style="left:733px;top:946px;width:2px;height:5px;background:#a9a6f2"></div>
<div class="r" style="left:733px;top:961px;width:1px;height:5px;background:#a9a6f2"></div>
<div class="r" style="left:733px;top:1012px;width:2px;height:1px;background:#a9a6f2"></div>
<div class="r" style="left:733px;top:1022px;width:1px;height:1px;background:#a9a6f2"></div>
<div class="r" style="left:733px;top:1030px;width:2px;height:1px;background:#a9a6f2"></div>
<div class="r" style="left:733px;top:1035px;width:2px;height:2px;background:#a9a6f2"></div>
<div class="r" style="left:733px;top:1039px;width:2px;height:2px;background:#a9a6f2"></div>
<div class="r" style="left:733px;top:1081px;width:1px;height:4px;background:#a9a6f2"></div>
<div class="r" style="left:733px;top:1083px;width:5px;height:2px;background:#a9a6f2"></div>
<div class="r" style="left:885px;top:739px;width:2px;height:241px;background:#7cc674"></div>
<div class="r" style="left:885px;top:739px;width:1px;height:1px;background:#3e6e38"></div>
<div class="r" style="left:885px;top:744px;width:1px;height:1px;background:#3e6e38"></div>
<div class="r" style="left:885px;top:749px;width:1px;height:1px;background:#3e6e38"></div>
<div class="r" style="left:885px;top:754px;width:1px;height:1px;background:#3e6e38"></div>
<div class="r" style="left:885px;top:759px;width:1px;height:1px;background:#3e6e38"></div>
<div class="r" style="left:885px;top:764px;width:1px;height:1px;background:#3e6e38"></div>
<div class="r" style="left:885px;top:785px;width:1px;height:1px;background:#3e6e38"></div>
<div class="r" style="left:885px;top:790px;width:1px;height:1px;background:#3e6e38"></div>
<div class="r" style="left:885px;top:795px;width:1px;height:1px;background:#3e6e38"></div>
<div class="r" style="left:885px;top:800px;width:1px;height:1px;background:#3e6e38"></div>
<div class="r" style="left:885px;top:805px;width:1px;height:1px;background:#3e6e38"></div>
<div class="r" style="left:885px;top:810px;width:1px;height:1px;background:#3e6e38"></div>
<div class="r" style="left:885px;top:815px;width:1px;height:1px;background:#3e6e38"></div>
<div class="r" style="left:885px;top:820px;width:1px;height:1px;background:#3e6e38"></div>
<div class="r" style="left:885px;top:825px;width:1px;height:1px;background:#3e6e38"></div>
<div class="r" style="left:885px;top:830px;width:1px;height:1px;background:#3e6e38"></div>
<div class="r" style="left:885px;top:835px;width:1px;height:1px;background:#3e6e38"></div>
<div class="r" style="left:885px;top:840px;width:1px;height:1px;background:#3e6e38"></div>
<div class="r" style="left:885px;top:845px;width:1px;height:1px;background:#3e6e38"></div>
<div class="r" style="left:885px;top:850px;width:1px;height:1px;background:#3e6e38"></div>
<div class="r" style="left:885px;top:855px;width:1px;height:1px;background:#3e6e38"></div>
<div class="r" style="left:885px;top:860px;width:1px;height:1px;background:#3e6e38"></div>
<div class="r" style="left:885px;top:865px;width:1px;height:1px;background:#3e6e38"></div>
<div class="r" style="left:885px;top:870px;width:1px;height:1px;background:#3e6e38"></div>
<div class="r" style="left:885px;top:875px;width:1px;height:1px;background:#3e6e38"></div>
<div class="r" style="left:885px;top:880px;width:1px;height:1px;background:#3e6e38"></div>
<div class="r" style="left:885px;top:885px;width:1px;height:1px;background:#3e6e38"></div>
<div class="r" style="left:885px;top:890px;width:1px;height:1px;background:#3e6e38"></div>
<div class="r" style="left:885px;top:895px;width:1px;height:1px;background:#3e6e38"></div>
<div class="r" style="left:885px;top:900px;width:1px;height:1px;background:#3e6e38"></div>
<div class="r" style="left:885px;top:905px;width:1px;height:1px;background:#3e6e38"></div>
<div class="r" style="left:885px;top:910px;width:1px;height:1px;background:#3e6e38"></div>
<div class="r" style="left:885px;top:915px;width:1px;height:1px;background:#3e6e38"></div>
<div class="r" style="left:885px;top:920px;width:1px;height:1px;background:#3e6e38"></div>
<div class="r" style="left:885px;top:925px;width:1px;height:1px;background:#3e6e38"></div>
<div class="r" style="left:885px;top:930px;width:1px;height:1px;background:#3e6e38"></div>
<div class="r" style="left:885px;top:935px;width:1px;height:1px;background:#3e6e38"></div>
<div class="r" style="left:885px;top:940px;width:1px;height:1px;background:#3e6e38"></div>
<div class="r" style="left:885px;top:945px;width:1px;height:1px;background:#3e6e38"></div>
<div class="r" style="left:885px;top:950px;width:1px;height:1px;background:#3e6e38"></div>
<div class="r" style="left:885px;top:955px;width:1px;height:1px;background:#3e6e38"></div>
<div class="r" style="left:885px;top:960px;width:1px;height:1px;background:#3e6e38"></div>
<div class="r" style="left:885px;top:965px;width:1px;height:1px;background:#3e6e38"></div>
<div class="r" style="left:885px;top:970px;width:1px;height:1px;background:#3e6e38"></div>
<div class="r" style="left:885px;top:975px;width:1px;height:1px;background:#3e6e38"></div>
<div class="r" style="left:885px;top:980px;width:1px;height:1px;background:#3e6e38"></div>
<div class="r" style="left:885px;top:980px;width:2px;height:105px;background:#5fae55"></div>
<div class="r" style="left:885px;top:980px;width:1px;height:105px;background:#4a8a42"></div>
<div class="r" style="left:887px;top:1085px;width:1px;height:16px;background:#8a8d90"></div>
<div class="r" style="left:1107px;top:739px;width:1px;height:206px;background:#f6d173"></div>
<div class="r" style="left:1107px;top:951px;width:1px;height:29px;background:#f6d173"></div>
<div class="r" style="left:1108px;top:980px;width:1px;height:121px;background:#8a8d90"></div>
<div class="r" style="left:1107px;top:980px;width:1px;height:105px;background:#f9e0a2"></div>
<div class="r" style="left:1087px;top:1031px;width:21px;height:1px;background:#f4c145"></div>
<div class="r" style="left:1098px;top:1030px;width:10px;height:2px;background:#f0ab00"></div>
<div class="r" style="left:1261px;top:715px;width:1px;height:24px;background:repeating-linear-gradient(#777 0 2px,transparent 2px 4px)"></div>
<div class="r" style="left:1261px;top:739px;width:1px;height:241px;background:#a8abae"></div>
<div class="r" style="left:1261px;top:739px;width:1px;height:1px;background:#444"></div>
<div class="r" style="left:1261px;top:744px;width:1px;height:1px;background:#444"></div>
<div class="r" style="left:1261px;top:749px;width:1px;height:1px;background:#444"></div>
<div class="r" style="left:1261px;top:754px;width:1px;height:1px;background:#444"></div>
<div class="r" style="left:1261px;top:759px;width:1px;height:1px;background:#444"></div>
<div class="r" style="left:1261px;top:764px;width:1px;height:1px;background:#444"></div>
<div class="r" style="left:1261px;top:785px;width:1px;height:1px;background:#444"></div>
<div class="r" style="left:1261px;top:790px;width:1px;height:1px;background:#444"></div>
<div class="r" style="left:1261px;top:795px;width:1px;height:1px;background:#444"></div>
<div class="r" style="left:1261px;top:800px;width:1px;height:1px;background:#444"></div>
<div class="r" style="left:1261px;top:805px;width:1px;height:1px;background:#444"></div>
<div class="r" style="left:1261px;top:810px;width:1px;height:1px;background:#444"></div>
<div class="r" style="left:1261px;top:815px;width:1px;height:1px;background:#444"></div>
<div class="r" style="left:1261px;top:820px;width:1px;height:1px;background:#444"></div>
<div class="r" style="left:1261px;top:825px;width:1px;height:1px;background:#444"></div>
<div class="r" style="left:1261px;top:830px;width:1px;height:1px;background:#444"></div>
<div class="r" style="left:1261px;top:835px;width:1px;height:1px;background:#444"></div>
<div class="r" style="left:1261px;top:840px;width:1px;height:1px;background:#444"></div>
<div class="r" style="left:1261px;top:845px;width:1px;height:1px;background:#444"></div>
<div class="r" style="left:1261px;top:850px;width:1px;height:1px;background:#444"></div>
<div class="r" style="left:1261px;top:855px;width:1px;height:1px;background:#444"></div>
<div class="r" style="left:1261px;top:860px;width:1px;height:1px;background:#444"></div>
<div class="r" style="left:1261px;top:865px;width:1px;height:1px;background:#444"></div>
<div class="r" style="left:1261px;top:870px;width:1px;height:1px;background:#444"></div>
<div class="r" style="left:1261px;top:875px;width:1px;height:1px;background:#444"></div>
<div class="r" style="left:1261px;top:880px;width:1px;height:1px;background:#444"></div>
<div class="r" style="left:1261px;top:885px;width:1px;height:1px;background:#444"></div>
<div class="r" style="left:1261px;top:890px;width:1px;height:1px;background:#444"></div>
<div class="r" style="left:1261px;top:895px;width:1px;height:1px;background:#444"></div>
<div class="r" style="left:1261px;top:900px;width:1px;height:1px;background:#444"></div>
<div class="r" style="left:1261px;top:905px;width:1px;height:1px;background:#444"></div>
<div class="r" style="left:1261px;top:910px;width:1px;height:1px;background:#444"></div>
<div class="r" style="left:1261px;top:915px;width:1px;height:1px;background:#444"></div>
<div class="r" style="left:1261px;top:920px;width:1px;height:1px;background:#444"></div>
<div class="r" style="left:1261px;top:925px;width:1px;height:1px;background:#444"></div>
<div class="r" style="left:1261px;top:930px;width:1px;height:1px;background:#444"></div>
<div class="r" style="left:1261px;top:935px;width:1px;height:1px;background:#444"></div>
<div class="r" style="left:1261px;top:940px;width:1px;height:1px;background:#444"></div>
<div class="r" style="left:1261px;top:945px;width:1px;height:1px;background:#444"></div>
<div class="r" style="left:1261px;top:950px;width:1px;height:1px;background:#444"></div>
<div class="r" style="left:1261px;top:955px;width:1px;height:1px;background:#444"></div>
<div class="r" style="left:1261px;top:960px;width:1px;height:1px;background:#444"></div>
<div class="r" style="left:1261px;top:965px;width:1px;height:1px;background:#444"></div>
<div class="r" style="left:1261px;top:970px;width:1px;height:1px;background:#444"></div>
<div class="r" style="left:1261px;top:975px;width:1px;height:1px;background:#444"></div>
<div class="r" style="left:1261px;top:980px;width:1px;height:1px;background:#444"></div>
<div class="r" style="left:1261px;top:980px;width:1px;height:121px;background:#8a8d90"></div>
<div class="r" style="left:1253px;top:1031px;width:8px;height:1px;background:#a0a3a6"></div>
<div class="r" style="left:665px;top:1085px;width:137px;height:2px;background:linear-gradient(90deg,#4b48c9,#a9a6f2 14%,#a9a6f2)"></div>
<div class="r" style="left:818px;top:1085px;width:137px;height:2px;background:linear-gradient(90deg,#3e8635,#95d58e 14%,#95d58e)"></div>
<div class="r" style="left:971px;top:1085px;width:137px;height:2px;background:linear-gradient(90deg,#f0ab00,#f6d173 14%,#f6d173)"></div>
<div class="r" style="left:1125px;top:1085px;width:137px;height:2px;background:linear-gradient(90deg,#8a8d90,#c4c6c8 30%,#c4c6c8)"></div>
<div class="r" style="left:1173px;top:1084px;width:89px;height:1px;background:#b8bbbe"></div>
<svg class="r" style="left:266.5px;top:693.5px;" width="11" height="8" viewBox="0 0 11 8"><path d="M1.5 1.5 L5.5 5.5 L9.5 1.5" fill="none" stroke="#6a6e73" stroke-width="2.3" stroke-linecap="round" stroke-linejoin="round"/></svg>
<div class="t" style="top:691.00px;font-size:14px;line-height:14px;color:#151515;font-weight:700;letter-spacing:-0.1px;left:304px;">1:00 PM</div>
<svg class="r" style="left:378px;top:691px;" width="14" height="14" viewBox="0 0 14 14"><circle cx="7" cy="7" r="6.1" fill="none" stroke="#b8bbbe" stroke-width="1.5"/><path d="M4.2 9 Q7 10 9.8 9" fill="none" stroke="#b8bbbe" stroke-width="1.4"/></svg>
<div class="t" style="top:691.00px;font-size:14px;line-height:14px;color:#151515;letter-spacing:-0.3px;left:400px;">1 spike</div>
<div class="t" style="top:691.00px;font-size:14px;line-height:14px;color:#151515;letter-spacing:-0.1px;left:452px;">1 Network I/O</div>
<div class="t" style="top:769.00px;font-size:14px;line-height:14px;color:#151515;letter-spacing:-0.2px;left:304px;">1:39 PM</div>
<div class="t" style="top:769.00px;font-size:14px;line-height:14px;color:#0066cc;letter-spacing:0.2px;left:453px;">Network I/O</div>
<div class="t" style="top:985.00px;font-size:14px;line-height:14px;color:#151515;letter-spacing:-0.3px;left:304px;">12:00 PM</div>
<div class="t" style="top:985.00px;font-size:14px;line-height:14px;color:#6a6e73;left:416.5px;">No events</div>
<svg class="r" style="left:268px;top:1054px;" width="8" height="11" viewBox="0 0 8 11"><path d="M1.5 1.5 L5.5 5.5 L1.5 9.5" fill="none" stroke="#6a6e73" stroke-width="2.3" stroke-linecap="round" stroke-linejoin="round"/></svg>
<div class="t" style="top:1053.00px;font-size:14px;line-height:14px;color:#151515;font-weight:700;letter-spacing:-0.3px;left:304px;">11:00 AM</div>
<svg class="r" style="left:378px;top:1053px;" width="14" height="14" viewBox="0 0 14 14"><circle cx="7" cy="7" r="6.1" fill="none" stroke="#b8bbbe" stroke-width="1.5"/><path d="M4.2 9 Q7 10 9.8 9" fill="none" stroke="#b8bbbe" stroke-width="1.4"/></svg>
<div class="t" style="top:1053.00px;font-size:14px;line-height:14px;color:#151515;letter-spacing:-0.3px;left:400px;">1 spike</div>
<div class="t" style="top:1053.00px;font-size:14px;line-height:14px;color:#151515;letter-spacing:-0.1px;left:452px;">1 Network I/O</div>
<div class="r" style="left:682px;top:647px;width:480px;height:160px;background:#fff;box-shadow:0 8px 16px 0 rgba(3,3,3,0.16),0 0 6px 0 rgba(3,3,3,0.08)"></div>
<svg class="r" style="left:660px;top:705px;filter:drop-shadow(-3px 2px 3px rgba(3,3,3,0.12))" width="24" height="44" viewBox="0 0 24 44"><path d="M4.5 22 L23 4 L23 40 Z" fill="#fff"/></svg>
<div class="r" style="left:682px;top:700px;width:6px;height:55px;background:#fff"></div>
<div class="r" style="left:698px;top:663px;width:161px;height:36px;border:1px solid #0066cc;border-radius:3px;box-sizing:border-box"></div>
<div class="t" style="top:674.00px;font-size:16px;line-height:16px;color:#0066cc;left:714px;">View detailed logs</div>
<svg class="r" style="left:1131px;top:668px;" width="14" height="14" viewBox="0 0 14 14"><path d="M2.2 2.2 L11.8 11.8 M11.8 2.2 L2.2 11.8" stroke="#6a6e73" stroke-width="2.7" stroke-linecap="round"/></svg>
<div class="t" style="top:710.00px;font-size:12px;line-height:12px;color:#56595d;font-family:'Liberation Mono', monospace;left:728px;">1:39 PM</div>
<div class="t" style="top:707.00px;font-size:14px;line-height:14px;color:#0066cc;letter-spacing:-0.25px;left:787px;">gvc_mixer_card_get_index:</div>
<div class="t" style="top:707.00px;font-size:14px;line-height:14px;color:#6a6e73;left:961px;">gsd-media-keys</div>
<div class="r" style="left:1066px;top:706px;width:32px;height:17px;background:#f0f0f0;border-radius:9px"></div>
<div class="t" style="top:710.00px;font-size:12px;line-height:12px;color:#151515;left:782px;width:600px;text-align:center;-webkit-text-stroke:0.3px #151515;">10</div>
<div class="t" style="top:728.00px;font-size:14px;line-height:14px;color:#0066cc;left:790px;">assertion</div>
<div class="t" style="top:749.00px;font-size:14px;line-height:14px;color:#0066cc;letter-spacing:-0.2px;left:787px;">'GVC_IS_MIXER_CARD</div>
<div class="t" style="top:770.00px;font-size:14px;line-height:14px;color:#0066cc;left:787px;">(card)' failed</div>
<div class="r" style="left:0px;top:0px;width:240px;height:1110px;background:#212427"></div>
<div class="r" style="left:0px;top:60px;width:240px;height:1px;background:#2f2e2b"></div>
<div class="t" style="top:11.00px;font-size:16px;line-height:16px;color:#f0f0f0;letter-spacing:-0.9px;left:24px;">jzb@</div>
<div class="t" style="top:35.00px;font-size:16px;line-height:16px;color:#ffffff;font-weight:700;letter-spacing:-0.3px;left:24px;">arcadia</div>
<svg class="r" style="left:214px;top:27px;" width="11" height="7" viewBox="0 0 11 7"><path d="M0.5 0.5 L10.5 0.5 L5.5 6.5 Z" fill="#fff"/></svg>
<div class="r" style="left:24px;top:77px;width:192px;height:36px;background:#1b1b1c;border-radius:3px"></div>
<svg class="r" style="left:31px;top:85px;" width="17" height="17" viewBox="0 0 17 17"><circle cx="7" cy="7" r="5" fill="none" stroke="#c4c4c4" stroke-width="2.4"/><path d="M10.5 10.5 L15 15" stroke="#c4c4c4" stroke-width="2.6" stroke-linecap="round"/></svg>
<div class="t" style="top:88.00px;font-size:16px;line-height:16px;color:#c4c4c4;letter-spacing:-0.3px;left:56px;">Search</div>
<div class="t" style="top:139.00px;font-size:14px;line-height:14px;color:#f0f0f0;left:24px;">System</div>
<div class="r" style="left:0px;top:163px;width:240px;height:1px;background:#4b4e51"></div>
<div class="t" style="top:185.00px;font-size:16px;line-height:16px;color:#f0f0f0;left:24px;">Overview</div>
<div class="t" style="top:233.00px;font-size:16px;line-height:16px;color:#f0f0f0;left:24px;">Logs</div>
<div class="t" style="top:281.00px;font-size:16px;line-height:16px;color:#f0f0f0;left:24px;">Storage</div>
<div class="t" style="top:329.00px;font-size:16px;line-height:16px;color:#f0f0f0;left:24px;">Networking</div>
<div class="t" style="top:377.00px;font-size:16px;line-height:16px;color:#f0f0f0;left:24px;">Podman containers</div>
<div class="t" style="top:425.00px;font-size:16px;line-height:16px;color:#f0f0f0;left:24px;">Virtual machines</div>
<div class="t" style="top:473.00px;font-size:16px;line-height:16px;color:#f0f0f0;left:24px;">Accounts</div>
<div class="t" style="top:521.00px;font-size:16px;line-height:16px;color:#f0f0f0;left:24px;">Services</div>
<div class="t" style="top:569.00px;font-size:16px;line-height:16px;color:#f0f0f0;left:24px;">Navigator</div>
<div class="t" style="top:638.00px;font-size:14px;line-height:14px;color:#f0f0f0;left:24px;">Tools</div>
<div class="r" style="left:0px;top:662px;width:240px;height:1px;background:#4b4e51"></div>
<div class="t" style="top:684.00px;font-size:16px;line-height:16px;color:#f0f0f0;left:24px;">Applications</div>
<div class="t" style="top:732.00px;font-size:16px;line-height:16px;color:#f0f0f0;left:24px;">Software updates</div>
<div class="t" style="top:780.00px;font-size:16px;line-height:16px;color:#f0f0f0;left:24px;">Terminal</div>
</body></html>
